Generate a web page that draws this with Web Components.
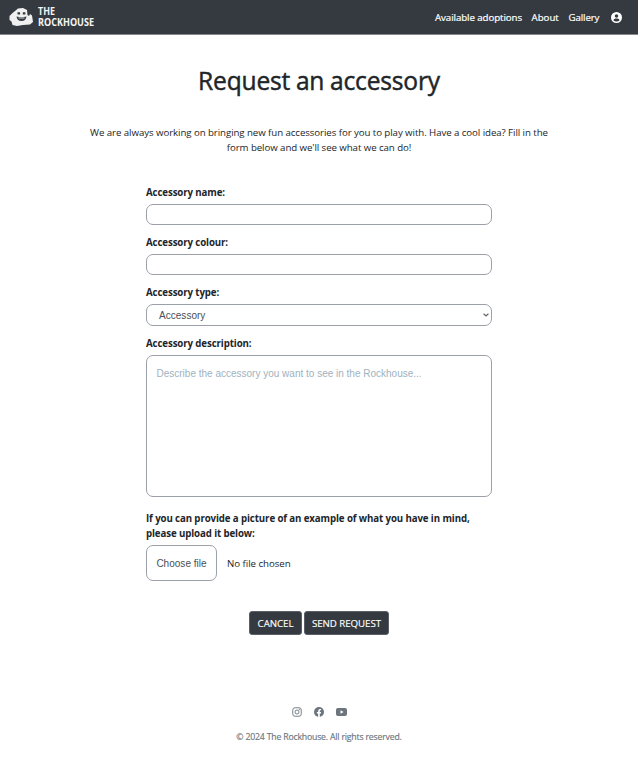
<!DOCTYPE html>
<html lang="en">
<head>
<meta charset="utf-8">
<title>The Rockhouse</title>
<style>
body{margin:0;background:#fff;color:#212529;font:10px/15px "Open Sans","Noto Sans",sans-serif}
</style>
</head>
<body>
<rock-page></rock-page>
<script>
const define=(name,html,setup)=>customElements.define(name,class extends HTMLElement{
  connectedCallback(){
    if(this.shadowRoot)return;
    const t=document.createElement('template');
    t.innerHTML=html;
    this.attachShadow({mode:'open'}).append(t.content.cloneNode(true));
    if(setup)setup(this,this.shadowRoot);
  }
});

define('rock-logo',`<style>
:host{display:flex;align-items:center;gap:5px;color:#f4f4f4}
svg{display:block}
.name{display:block;width:57px;height:20px;overflow:visible;font:bold 11px "Open Sans",sans-serif;fill:#f4f4f4}
</style>
<svg width="24" height="20" viewBox="0 0 24 20"><path fill="#f0f0f0" d="M6 4L9 1.5L14 1L18 3L18.5 8L20 9L21 7L23 8.5L24 15L21 17.5L14 18L8 19L3.5 18L2.5 14.5L.5 13V9L3 6.5Z"/><path fill="#343a40" d="M8.5 5.2h2.6v2.3h-2.6zM13.8 5.2h2.6v2.3h-2.6zM7.5 9.5Q12.5 11 17.5 9.5Q16.8 14 12.5 14Q8.2 14 7.5 9.5Z"/><path d="M9.5 11H15.5" stroke="#c8cacc" stroke-width="1"/></svg>
<svg class="name" viewBox="0 0 57 20"><text x="0" y="8.3" textLength="17" lengthAdjust="spacingAndGlyphs" font-size="10.5">THE</text><text x="0" y="18.5" textLength="56" lengthAdjust="spacingAndGlyphs" font-size="10.5">ROCKHOUSE</text></svg>`);

define('nav-link',`<style>
:host{display:block;color:#fff;font-size:9.7px;-webkit-text-stroke:.2px #fff;white-space:nowrap}
</style><slot></slot>`);

define('rock-header',`<style>
:host{display:flex;box-sizing:border-box;height:35px;padding:0 16px 0 9px;align-items:center;justify-content:space-between;background:#343a40;border-bottom:1px solid #85878c}
nav{display:flex;align-items:center;gap:10px}
svg{display:block;margin-left:2px}
</style>
<rock-logo></rock-logo>
<nav>
<nav-link style="width:86.5px;letter-spacing:-.07px">Available adoptions</nav-link><nav-link style="width:27px">About</nav-link><nav-link style="width:30.5px;letter-spacing:-.1px">Gallery</nav-link>
<svg width="11" height="11" viewBox="0 0 22 22"><circle cx="11" cy="11" r="11" fill="#fff"/><circle cx="11" cy="8" r="3.5" fill="#343a40"/><path d="M4.8 16.5Q6 13 9 13H13Q16 13 17.2 16.5Q15 19 11 19T4.8 16.5Z" fill="#343a40"/></svg>
</nav>`);

define('form-field',`<style>
:host{display:block}
label{display:block;font-weight:700;font-size:9.7px;line-height:15px;margin-bottom:4px;letter-spacing:-.11px}
</style><label><slot name="label"></slot></label><slot></slot>`);

define('text-box',`<style>
:host{display:block}
input,textarea{display:block;box-sizing:border-box;width:100%;height:21px;border:1px solid #9ca0a8;border-radius:7px;background:#fff;margin:0;outline:0;padding:0 10px;font:10px/15px "Liberation Sans",sans-serif;color:#495057}
textarea{height:142px;padding:10px 9.5px;resize:none}
::placeholder{color:#a0b2c0;opacity:1}
</style>`,(el,root)=>{
  const b=document.createElement(el.hasAttribute('multiline')?'textarea':'input');
  b.placeholder=el.getAttribute('placeholder')||'';
  root.append(b);
});

define('select-box',`<style>
:host{display:flex;box-sizing:border-box;height:22px;align-items:center;justify-content:space-between;border:1px solid #9ca0a8;border-radius:7px;padding:0 2px 0 12px;font:10px/15px "Liberation Sans",sans-serif;color:#495057;letter-spacing:.03px}
svg{display:block}
</style><span><slot></slot></span><svg width="6" height="4" viewBox="0 0 6 4"><path d="M.6.7L3 3L5.4.7" fill="none" stroke="#62666c" stroke-width="1.2"/></svg>`);

define('file-picker',`<style>
:host{display:flex;align-items:center;gap:10px;font-size:9.7px;letter-spacing:-.04px}
button{box-sizing:border-box;width:71px;height:36px;margin:0;padding:0;border:1px solid #9ca0a8;border-radius:7px;background:#fff;color:#495057;font:10px/15px "Liberation Sans",sans-serif;letter-spacing:.02px}
</style><button>Choose file</button><span><slot></slot></span>`);

define('action-button',`<style>
:host{display:block}
button{display:block;box-sizing:border-box;width:100%;height:24px;margin:0;padding:2px 0 0;border:1px solid #5a5f69;border-radius:3px;background:#343a40;color:#fff;font:9.7px/20px "Open Sans",sans-serif;white-space:nowrap;-webkit-text-stroke:.15px #fff;letter-spacing:-.04px}
</style><button><slot></slot></button>`);

define('request-form',`<style>
:host{display:block;width:346px;margin:30px auto 0}
form-field{margin-bottom:10px}
.desc{margin-bottom:14px}
.actions{display:flex;justify-content:center;gap:2px;margin-top:30px}
</style>
<form-field><span slot="label">Accessory name:</span><text-box></text-box></form-field>
<form-field><span slot="label">Accessory colour:</span><text-box></text-box></form-field>
<form-field><span slot="label">Accessory type:</span><select-box>Accessory</select-box></form-field>
<form-field class="desc"><span slot="label">Accessory description:</span><text-box multiline placeholder="Describe the accessory you want to see in the Rockhouse..."></text-box></form-field>
<form-field><span slot="label">If you can provide a picture of an example of what you have in mind,<br>please upload it below:</span><file-picker>No file chosen</file-picker></form-field>
<div class="actions"><action-button style="width:53px">CANCEL</action-button><action-button style="width:85px">SEND REQUEST</action-button></div>`);

define('rock-footer',`<style>
:host{display:block;margin-top:72px;color:#6c757d;text-align:center}
.icons{display:flex;justify-content:center;align-items:center;gap:12px;height:10px;margin-bottom:13px}
svg{display:block}
p{margin:0;font-size:8.7px;line-height:14px;letter-spacing:-.18px;-webkit-text-stroke:.15px #6c757d}
</style>
<div class="icons">
<svg width="10" height="10" viewBox="0 0 20 20" fill="none" stroke="#6c757d" stroke-width="1.8"><rect x="1.5" y="1.5" width="17" height="17" rx="4.5"/><circle cx="10" cy="10" r="4"/><circle cx="15" cy="5" r=".6"/></svg>
<svg width="10" height="10" viewBox="0 0 20 20"><circle cx="10" cy="10" r="10" fill="#6c757d"/><path fill="#fff" d="M8.3 20V13H5.8V10H8.3V7.8Q8.3 4 12 4L14.2 4.2V6.7H13Q11.6 6.7 11.6 8.2V10H14.2L13.7 13H11.6V20Z"/></svg>
<svg width="11" height="8" viewBox="0 0 22 16"><rect width="22" height="16" rx="4" fill="#6c757d"/><path d="M9 4.5L15 8L9 11.5Z" fill="#fff"/></svg>
</div>
<p><slot></slot></p>`);

define('rock-page',`<style>
:host{display:block}
h1{margin:28px 0 0;font-size:24.6px;line-height:36px;font-weight:400;-webkit-text-stroke:.45px #212529;text-align:center;letter-spacing:-.2px;word-spacing:-.4px}
.intro{margin:26px 0 0;text-align:center;font-size:9.7px;line-height:15px;white-space:nowrap;letter-spacing:-.075px}
</style>
<rock-header></rock-header>
<h1>Request an accessory</h1>
<p class="intro">We are always working on bringing new fun accessories for you to play with. Have a cool idea? Fill in the<br>form below and we'll see what we can do!</p>
<request-form></request-form>
<rock-footer>© 2024 The Rockhouse. All rights reserved.</rock-footer>`);
</script>
</body>
</html>
